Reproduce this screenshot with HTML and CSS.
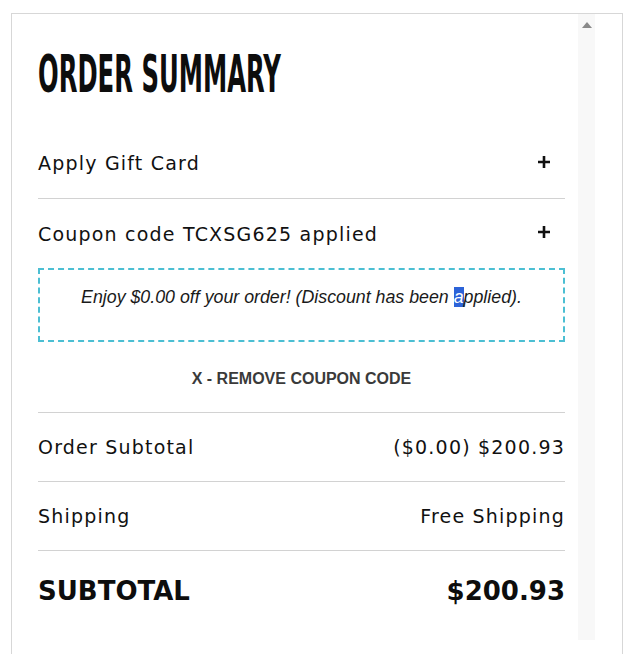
FILE: index.html
```html
<!DOCTYPE html>
<html lang="en">
<head>
<meta charset="utf-8">
<title>Order Summary</title>
<link rel="stylesheet" href="styles.css">
</head>
<body>
<div class="panel">
  <div class="content">
    <h1 class="title"><span class="title-text">ORDER SUMMARY</span></h1>

    <div class="acc-row first">
      <span class="label">Apply Gift Card</span>
      <svg class="plus" width="14" height="14" viewBox="0 0 14 14"><path d="M7 1v12M1 7h12" stroke="#111" stroke-width="2.6" fill="none"/></svg>
    </div>

    <div class="acc-row coupon">
      <span class="label">Coupon code TCXSG625 applied</span>
      <svg class="plus" width="14" height="14" viewBox="0 0 14 14"><path d="M7 1v12M1 7h12" stroke="#111" stroke-width="2.6" fill="none"/></svg>
    </div>

    <div class="notice">
      <p class="notice-text">Enjoy $0.00 off your order! (Discount has been <span class="sel">a</span>pplied).</p>
    </div>

    <div class="remove">X - REMOVE COUPON CODE</div>

    <div class="line-row">
      <span class="label">Order Subtotal</span>
      <span class="value">($0.00) $200.93</span>
    </div>
    <div class="line-row">
      <span class="label">Shipping</span>
      <span class="value">Free Shipping</span>
    </div>
    <div class="total-row">
      <span class="total-label">SUBTOTAL</span>
      <span class="total-value">$200.93</span>
    </div>
  </div>
  <div class="track">
    <span class="arrow"></span>
  </div>
</div>
</body>
</html>
```

FILE: styles.css
```css
html, body {
  margin: 0;
  padding: 0;
  background: #ffffff;
}

body {
  font-family: "DejaVu Sans", "Liberation Sans", sans-serif;
  color: #111111;
  height: 654px;
  overflow: hidden;
}

.panel {
  margin: 13px 0 0 11px;
  width: 610px;
  height: 700px;
  border: 1px solid #d7d7d7;
  display: flex;
}

.content {
  width: 527px;
  padding-left: 26px;
}

.title {
  margin: 0;
  padding-top: 32px;
  height: 104px;
  box-sizing: border-box;
  line-height: 56px;
  font-size: 52px;
  font-weight: bold;
  font-stretch: condensed;
  font-family: "DejaVu Sans", sans-serif;
  color: #0d0d0d;
}

.title-text {
  display: inline-block;
  transform: scaleX(0.52);
  transform-origin: 0 50%;
  white-space: nowrap;
}

.acc-row {
  display: flex;
  align-items: center;
  justify-content: space-between;
  font-size: 19px;
  letter-spacing: 1.2px;
  box-sizing: border-box;
}

.acc-row.first {
  height: 81px;
  padding-top: 10px;
  border-bottom: 1px solid #d2d2d2;
}

.acc-row.coupon {
  height: 69px;
}

.plus {
  margin-right: 14px;
  margin-bottom: 3px;
  display: block;
}

.notice {
  border: 2px dashed #4cbfd3;
  height: 70px;
  box-sizing: content-box;
  display: flex;
  justify-content: center;
  align-items: flex-start;
}

.notice-text {
  margin: 16px 0 0;
  font-family: "Liberation Sans", Arial, sans-serif;
  font-style: italic;
  font-size: 17.8px;
  line-height: 22px;
  color: #1a1a1a;
}

.sel {
  background: #2c63d8;
  color: #ffffff;
}

.remove {
  height: 71px;
  box-sizing: border-box;
  padding-top: 3px;
  display: flex;
  align-items: center;
  justify-content: center;
  font-family: "Liberation Sans", Arial, sans-serif;
  font-weight: bold;
  font-size: 16px;
  color: #3a3a3a;
  border-bottom: 1px solid #d2d2d2;
}

.line-row {
  height: 69px;
  box-sizing: border-box;
  display: flex;
  align-items: center;
  justify-content: space-between;
  font-size: 19px;
  letter-spacing: 1.2px;
  border-bottom: 1px solid #d2d2d2;
}

.total-row {
  height: 80px;
  display: flex;
  align-items: center;
  justify-content: space-between;
  font-weight: bold;
  font-size: 26px;
  color: #0d0d0d;
}

.track {
  margin-left: 13px;
  width: 17px;
  height: 626px;
  background: #f8f8f8;
  position: relative;
}

.arrow {
  position: absolute;
  left: 4px;
  top: 8px;
  width: 0;
  height: 0;
  border-left: 5px solid transparent;
  border-right: 5px solid transparent;
  border-bottom: 6px solid #8a8a8a;
}
```
